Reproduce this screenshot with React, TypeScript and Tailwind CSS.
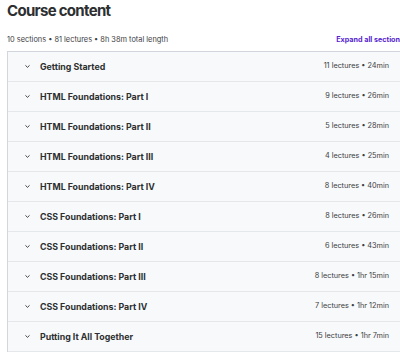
import React from "react";

const sections = [
  ["Getting Started", "11 lectures • 24min"],
  ["HTML Foundations: Part I", "9 lectures • 26min"],
  ["HTML Foundations: Part II", "5 lectures • 28min"],
  ["HTML Foundations: Part III", "4 lectures • 25min"],
  ["HTML Foundations: Part IV", "8 lectures • 40min"],
  ["CSS Foundations: Part I", "8 lectures • 26min"],
  ["CSS Foundations: Part II", "6 lectures • 43min"],
  ["CSS Foundations: Part III", "8 lectures • 1hr 15min"],
  ["CSS Foundations: Part IV", "7 lectures • 1hr 12min"],
  ["Putting It All Together", "15 lectures • 1hr 7min"],
];

function Chevron() {
  return (
    <svg width="7" height="7" viewBox="0 0 10 10" className="shrink-0">
      <path d="M2.5 3.8 L5 6.2 L7.5 3.8" fill="none" stroke="#2d2f31" strokeWidth="1.3" strokeLinecap="round" strokeLinejoin="round" />
    </svg>
  );
}

export default function App() {
  return (
    <div
      className="w-[400px] h-[352px] overflow-hidden bg-white text-[#2d2f31]"
      style={{ fontFamily: "Inter, 'Noto Sans', sans-serif" }}
    >
      <div className="w-[397px] ml-[7px]">
        <h2 className="text-[15px] font-bold leading-[20px] pt-[1px] tracking-[-0.7px]">Course content</h2>
        <div className="flex items-center justify-between h-[12px] mt-[13px] mb-[5px]">
          <span className="text-[7.4px] text-[#3d4043]">10 sections • 81 lectures • 8h 38m total length</span>
          <span className="text-[7.2px] font-bold text-[#5624d0] whitespace-nowrap">Expand all sections</span>
        </div>
        <div className="border border-[#d1d7dc] border-b-0">
          {sections.map(([t, m]) => (
            <div
              key={t}
              className="flex items-center h-[30px] bg-[#f7f9fa] border-b border-[#e4e8eb] pl-[16px] pr-[14px]"
            >
              <Chevron />
              <span className="ml-[9px] text-[8.8px] font-bold flex-1">{t}</span>
              <span className="text-[7.3px] text-[#3d4043]">{m}</span>
            </div>
          ))}
        </div>
      </div>
    </div>
  );
}
